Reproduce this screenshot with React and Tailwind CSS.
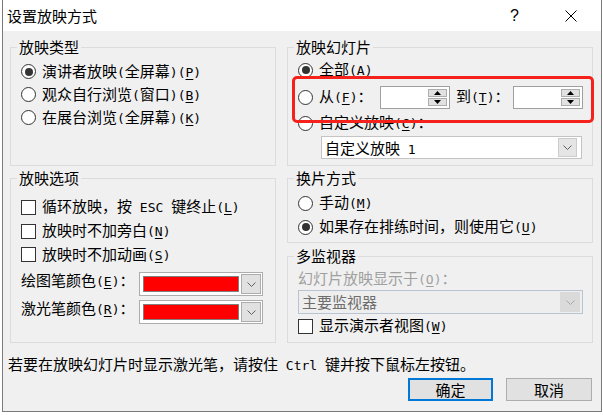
import React from "react";

function T({ s }) {
  const segs = s.split(/([\x00-\x7f]+)/);
  return (
    <>
      {segs.map((seg, i) => {
        if (!seg) return null;
        if (/^[\x00-\x7f]+$/.test(seg)) {
          const pieces = seg.split(/(&.)/).map((p, j) => {
            if (!p) return null;
            if (p[0] === "&" && p.length === 2)
              return (
                <u key={j} className="underline underline-offset-[2px]">
                  {p[1]}
                </u>
              );
            return <React.Fragment key={j}>{p}</React.Fragment>;
          });
          return (
            <span key={i} className="font-['DejaVu_Sans_Mono',monospace] text-[13px] whitespace-pre">
              {pieces}
            </span>
          );
        }
        return <React.Fragment key={i}>{seg}</React.Fragment>;
      })}
    </>
  );
}

function Group({ title, className, children }) {
  return (
    <fieldset className={`border border-[#dcdcdc] min-w-0 ${className}`}>
      <legend className="ml-[6px] px-[2px] leading-[16px]">{title}</legend>
      {children}
    </fieldset>
  );
}

function Radio({ checked }) {
  return (
    <span className="w-[15px] h-[15px] shrink-0 rounded-full border border-[#333333] bg-white flex items-center justify-center">
      {checked && <span className="w-[8px] h-[8px] rounded-full bg-[#333333]" />}
    </span>
  );
}

function Check() {
  return <span className="w-[15px] h-[15px] shrink-0 border border-[#333333] bg-white" />;
}

function Chevron({ color }) {
  return (
    <svg width="9" height="5" viewBox="0 0 9 5">
      <path d="M0.5 0.5L4.5 4.5L8.5 0.5" fill="none" stroke={color} strokeWidth="1" />
    </svg>
  );
}

function SpinBtn({ up }) {
  return (
    <div className="flex-1 bg-[#e1e1e1] border border-[#adadad] flex items-center justify-center">
      <svg width="7" height="4" viewBox="0 0 7 4">
        {up ? <path d="M3.5 0L7 4H0z" fill="#000" /> : <path d="M0 0H7L3.5 4z" fill="#000" />}
      </svg>
    </div>
  );
}

function Spin({ className }) {
  return (
    <div className={`h-[23px] bg-white border border-[#a0a0a0] flex justify-end p-[2px] ${className}`}>
      <div className="w-[19px] flex flex-col gap-[1px]">
        <SpinBtn up />
        <SpinBtn />
      </div>
    </div>
  );
}

function ColorCombo() {
  return (
    <div className="w-[124px] h-[24px] bg-white border border-[#adadad] flex items-center pl-[3px] pr-[1px] gap-[2px]">
      <div className="flex-1 h-[16px] bg-[#ff0000] border border-[#808080]" />
      <div className="w-[20px] h-[20px] bg-[#e1e1e1] border border-[#adadad] flex items-center justify-center">
        <Chevron color="#606060" />
      </div>
    </div>
  );
}

export default function App() {
  return (
    <div className="relative w-[603px] h-[415px] bg-white overflow-hidden font-['Noto_Sans_CJK_SC',sans-serif] text-[15px] leading-[18px] text-black">
      <div className="ml-[2px] w-[600px] h-[412px] border-x border-b border-[#7a7a7a] flex flex-col">
        <div className="h-[31px] shrink-0 bg-white flex items-center pl-[4px] pr-[24px]">
          <span>设置放映方式</span>
          <span className="flex-1" />
          <span className="mr-[46px] font-['Liberation_Sans',sans-serif] text-[16px]">?</span>
          <svg width="12" height="12" viewBox="0 0 12 12">
            <path d="M0.5 0.5L11.5 11.5M11.5 0.5L0.5 11.5" stroke="#000" strokeWidth="1" />
          </svg>
        </div>

        <div className="flex-1 bg-[#f0f0f0] pl-[5px] pr-[8px] pt-[8px] flex flex-col">
          <div className="ml-[2px] flex gap-[11px]">
            <Group title="放映类型" className="w-[266px] h-[127px]">
              <div className="pl-[10px] pt-[5px] flex flex-col">
                {[
                  ["演讲者放映(全屏幕)(&P)", true],
                  ["观众自行浏览(窗口)(&B)", false],
                  ["在展台浏览(全屏幕)(&K)", false],
                ].map(([l, c]) => (
                  <div key={l} className="h-[23px] flex items-center gap-[6px] whitespace-nowrap">
                    <Radio checked={c} />
                    <span>
                      <T s={l} />
                    </span>
                  </div>
                ))}
              </div>
            </Group>

            <Group title="放映幻灯片" className="w-[306px] h-[127px]">
              <div className="pl-[10px] pt-[2px] flex flex-col">
                <div className="h-[26px] flex items-center gap-[6px] whitespace-nowrap">
                  <Radio checked />
                  <span>
                    <T s="全部(&A)" />
                  </span>
                </div>
                <div className="h-[28px] flex items-center whitespace-nowrap">
                  <Radio />
                  <span className="ml-[6px] w-[61px]">
                    <T s="从(&F)" />：
                  </span>
                  <Spin className="w-[70px]" />
                  <span className="ml-[6px] w-[57px]">
                    <T s="到(&T)" />：
                  </span>
                  <Spin className="w-[70px]" />
                </div>
                <div className="h-[24px] flex items-center gap-[6px] whitespace-nowrap">
                  <Radio />
                  <span>
                    <T s="自定义放映(&C)" />：
                  </span>
                </div>
                <div className="ml-[23px] mt-[1px] w-[261px] h-[23px] bg-white border border-[#c4c4c4] flex items-center pl-[3px] pr-[4px]">
                  <span className="flex-1 h-[18px] whitespace-nowrap">
                    <T s="自定义放映 1" />
                  </span>
                  <div className="w-[19px] h-[19px] bg-[#e5e5e5] border border-[#cccccc] flex items-center justify-center">
                    <Chevron color="#606060" />
                  </div>
                </div>
              </div>
            </Group>
          </div>

          <div className="ml-[2px] mt-[4px] flex gap-[11px]">
            <Group title="放映选项" className="w-[266px] h-[173px]">
              <div className="pl-[10px] pt-[9px] flex flex-col">
                {[
                  ["循环放映，按 ESC 键终止(&L)", "h-[24px]"],
                  ["放映时不加旁白(&N)", "h-[24px]"],
                  ["放映时不加动画(&S)", "h-[23px]"],
                ].map(([l, h]) => (
                  <div key={l} className={`${h} flex items-center gap-[6px] whitespace-nowrap`}>
                    <Check />
                    <span>
                      <T s={l} />
                    </span>
                  </div>
                ))}
                <div className="mt-[6px] h-[24px] flex items-center whitespace-nowrap">
                  <span className="w-[118px] h-[18px] mb-[8px]">
                    <T s="绘图笔颜色(&E)" />：
                  </span>
                  <ColorCombo />
                </div>
                <div className="mt-[4px] h-[24px] flex items-center whitespace-nowrap">
                  <span className="w-[118px] h-[18px] mb-[8px]">
                    <T s="激光笔颜色(&R)" />：
                  </span>
                  <ColorCombo />
                </div>
              </div>
            </Group>

            <div className="flex flex-col gap-[5px]">
              <Group title="换片方式" className="w-[306px] h-[73px]">
                <div className="pl-[10px] pt-[5px] flex flex-col">
                  <div className="h-[24px] flex items-center gap-[6px] whitespace-nowrap">
                    <Radio />
                    <span>
                      <T s="手动(&M)" />
                    </span>
                  </div>
                  <div className="h-[24px] flex items-center gap-[6px] whitespace-nowrap">
                    <Radio checked />
                    <span>
                      <T s="如果存在排练时间，则使用它(&U)" />
                    </span>
                  </div>
                </div>
              </Group>
              <Group title="多监视器" className="w-[306px] h-[95px]">
                <div className="pl-[10px] pt-[5px] flex flex-col">
                  <div className="h-[18px] text-[#a0a0a0] whitespace-nowrap">
                    <T s="幻灯片放映显示于(&O)" />：
                  </div>
                  <div className="mt-[3px] w-[285px] h-[24px] bg-[#eeeeee] border border-[#b8c4d4] flex items-center pl-[3px] pr-[2px]">
                    <span className="flex-1 text-[#6d6d6d]">主要监视器</span>
                    <div className="w-[20px] h-[20px] bg-[#dadada] flex items-center justify-center">
                      <Chevron color="#a8a8a8" />
                    </div>
                  </div>
                  <div className="h-[24px] flex items-center gap-[6px] whitespace-nowrap">
                    <Check />
                    <span>
                      <T s="显示演示者视图(&W)" />
                    </span>
                  </div>
                </div>
              </Group>
            </div>
          </div>

          <div className="mt-[12px] h-[18px] whitespace-nowrap">
            <T s="若要在放映幻灯片时显示激光笔，请按住 Ctrl 键并按下鼠标左按钮。" />
          </div>

          <div className="mt-[5px] pr-[1px] flex justify-end gap-[13px]">
            <button className="w-[85px] h-[23px] bg-[#e1e1e1] border-2 border-[#0078d7] flex items-center justify-center">
              确定
            </button>
            <button className="w-[86px] h-[23px] bg-[#e1e1e1] border border-[#adadad] flex items-center justify-center">
              取消
            </button>
          </div>
        </div>
      </div>

      <div className="absolute left-[292px] top-[76px] w-[302px] h-[47px] border-[3px] border-[#f5221b] rounded-[5px]" />
    </div>
  );
}
